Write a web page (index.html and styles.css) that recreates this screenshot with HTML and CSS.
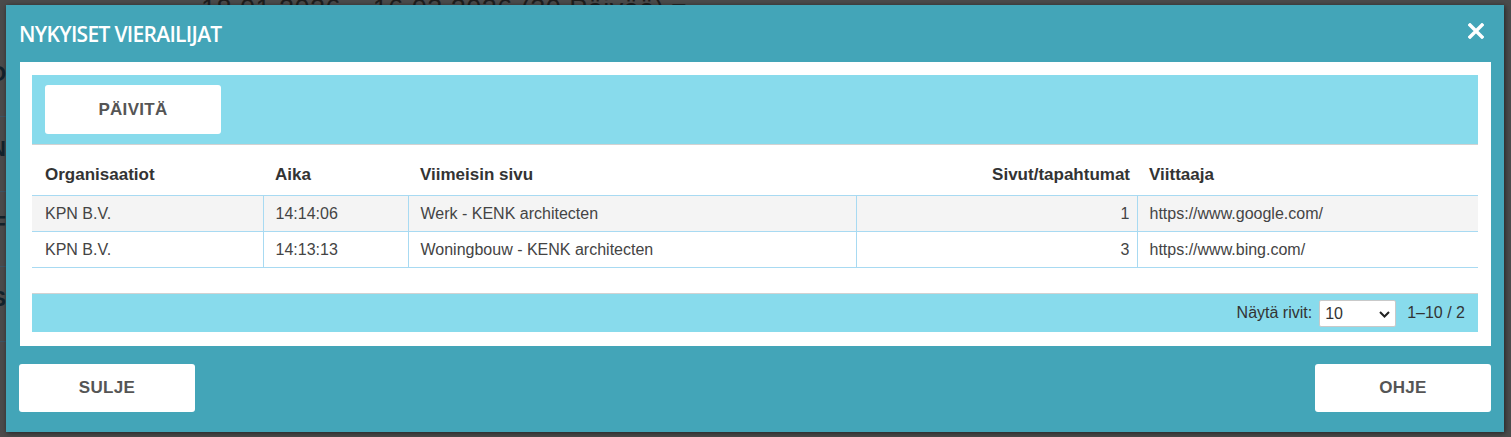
FILE: index.html
```html
<!DOCTYPE html>
<html lang="fi">

<head>
    <meta charset="UTF-8">
    <meta name="viewport" content="width=device-width, initial-scale=1.0">
    <title>Nykyiset vierailijat</title>
    <link rel="stylesheet" href="styles.css">
</head>

<body>
<!-- Page behind the modal (dimmed) -->
<div class="backdrop">
    <ul class="side-list">
        <li>INFO</li>
        <li>SIVUN</li>
        <li>REF</li>
        <li>OS</li>
    </ul>
    <div class="page-main">
        <div class="range">18.01.2026 – 16.03.2026 (30 Päivää) ▾</div>
    </div>
</div>

<!-- Current visitors dialog -->
<div class="dialog">
    <div class="dialog-header">
        <h2>NYKYISET VIERAILIJAT</h2>
        <button class="close" title="Sulje">
            <svg width="16" height="16" viewBox="0 0 16 16">
                <path d="M2 2 L14 14 M14 2 L2 14" stroke="#fff" stroke-width="3.4" stroke-linecap="square"/>
            </svg>
        </button>
    </div>

    <div class="dialog-body">
        <div class="toolbar">
            <button class="btn">PÄIVITÄ</button>
        </div>

        <table class="visitors">
            <colgroup>
                <col class="c-org">
                <col class="c-time">
                <col class="c-page">
                <col class="c-count">
                <col class="c-ref">
            </colgroup>
            <thead>
            <tr>
                <th>Organisaatiot</th>
                <th>Aika</th>
                <th>Viimeisin sivu</th>
                <th class="num">Sivut/tapahtumat</th>
                <th>Viittaaja</th>
            </tr>
            </thead>
            <tbody>
            <tr>
                <td>KPN B.V.</td>
                <td>14:14:06</td>
                <td>Werk - KENK architecten</td>
                <td class="num">1</td>
                <td>https://www.google.com/</td>
            </tr>
            <tr>
                <td>KPN B.V.</td>
                <td>14:13:13</td>
                <td>Woningbouw - KENK architecten</td>
                <td class="num">3</td>
                <td>https://www.bing.com/</td>
            </tr>
            </tbody>
        </table>

        <div class="pager">
            <span>Näytä rivit:</span>
            <span class="select-wrap">
                <select>
                    <option>10</option>
                    <option>25</option>
                    <option>50</option>
                </select>
                <svg class="chevron" width="11" height="7" viewBox="0 0 11 7">
                    <path d="M1 1 L5.5 5.5 L10 1" fill="none" stroke="#222" stroke-width="2"/>
                </svg>
            </span>
            <span>1–10 / 2</span>
        </div>
    </div>

    <div class="dialog-footer">
        <button class="btn btn-footer">SULJE</button>
        <button class="btn btn-footer">OHJE</button>
    </div>
</div>
</body>

</html>
```

FILE: styles.css
```css
/* Page + dimmed background */
body {
    margin: 0;
    height: 437px;
    overflow: hidden;
    background-color: #4b4b4b;
    font-family: "Liberation Sans", Arial, sans-serif;
}

.backdrop {
    display: flex;
}

.side-list {
    list-style: none;
    margin: 0;
    padding: 42px 0 0 0;
    width: 6px;
    overflow: hidden;
}

.side-list li {
    height: 74px;
    line-height: 64px;
    border-bottom: 1px solid #3e5563;
    direction: rtl;
    white-space: nowrap;
    font-weight: bold;
    font-size: 22px;
    color: #14232c;
}

.page-main {
    padding-left: 195px;
}

.range {
    margin-top: -7px;
    font-size: 27px;
    letter-spacing: 0.5px;
    color: #1e1e1e;
    white-space: nowrap;
}

/* Dialog */
.dialog {
    position: absolute;
    left: 6px;
    top: 5px;
    width: 1498px;
    height: 427px;
    background-color: #43a5b8;
    box-shadow: 1px 1px 5px rgba(0, 0, 0, 0.55);
    display: flex;
    flex-direction: column;
}

.dialog-header {
    height: 57px;
    display: flex;
    align-items: center;
    justify-content: space-between;
    padding: 0 20px 0 13px;
}

.dialog-header h2 {
    margin: 0;
    font-family: "Open Sans", sans-serif;
    font-weight: 600;
    font-size: 21px;
    letter-spacing: -0.7px;
    color: #fff;
}

.close {
    background: none;
    border: 0;
    padding: 0;
    margin-top: -5px;
    display: flex;
    cursor: pointer;
}

.dialog-body {
    background-color: #fff;
    margin: 0 13px 0 14px;
    padding: 13px 13px 14px 12px;
}

.toolbar {
    background-color: #88dbec;
    border-bottom: 1px solid #d2d2d2;
    padding: 10px 13px;
}

.btn {
    width: 176px;
    height: 49px;
    background-color: #fff;
    border: 0;
    border-radius: 3px;
    font-family: "Liberation Sans", Arial, sans-serif;
    font-weight: bold;
    font-size: 17px;
    letter-spacing: 0.3px;
    color: #555;
    cursor: pointer;
}

/* Visitors table */
.visitors {
    width: 100%;
    border-collapse: collapse;
    table-layout: fixed;
    margin-bottom: 25px;
    color: #444;
    font-size: 16px;
}

.c-org { width: 231px; }
.c-time { width: 145px; }
.c-page { width: 448px; }
.c-count { width: 281px; }

.visitors th {
    text-align: left;
    font-size: 17px;
    color: #333;
    line-height: 20px;
    padding: 20px 7px 10px 12px;
    border-bottom: 1px solid #a8daf2;
}

.visitors td {
    height: 35px;
    line-height: 20px;
    padding: 0 7px 0 12px;
    border-left: 1px solid #a8daf2;
    border-bottom: 1px solid #a8daf2;
    white-space: nowrap;
}

.visitors th:first-child,
.visitors td:first-child {
    padding-left: 13px;
    border-left: 0;
}

.visitors tbody tr:nth-child(odd) {
    background-color: #f4f4f4;
}

.visitors .num {
    text-align: right;
}

/* Pager */
.pager {
    display: flex;
    justify-content: flex-end;
    align-items: center;
    height: 38px;
    background-color: #88dbec;
    border-top: 1px solid #d2d2d2;
    padding-right: 13px;
    font-size: 16px;
    color: #333;
}

.select-wrap {
    position: relative;
    display: flex;
    margin: 1px 11px 0 7px;
}

.select-wrap select {
    appearance: none;
    -webkit-appearance: none;
    width: 77px;
    height: 27px;
    border: 1px solid #c9c9c9;
    border-radius: 2px;
    background-color: #fff;
    padding: 0 0 0 5px;
    font-family: "Liberation Sans", Arial, sans-serif;
    font-size: 16px;
    color: #333;
}

.chevron {
    position: absolute;
    right: 6px;
    top: 11px;
    pointer-events: none;
}

/* Footer buttons */
.dialog-footer {
    display: flex;
    justify-content: space-between;
    padding: 18px 13px 19px;
}

.btn-footer {
    height: 48px;
}
```
